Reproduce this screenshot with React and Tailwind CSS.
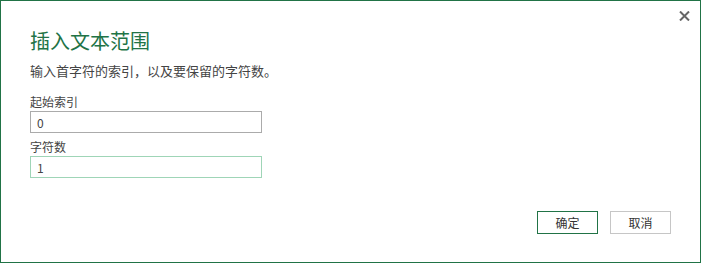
import React from "react";

const font = { fontFamily: '"Microsoft YaHei", "Noto Sans CJK SC", "Noto Sans", sans-serif' };

function Field({ label, value, focused }) {
    return (
        <div className="flex flex-col">
            <label className="mt-0 text-[12px] leading-[12px] text-[#444]">{label}</label>
            <input
                readOnly
                value={value}
                className={
                    "mt-[3px] h-[22px] w-[232px] border bg-white px-[6px] text-[12px] leading-[20px] text-[#444] outline-none " +
                    (focused ? "border-[#9fd5b7]" : "border-[#ababab]")
                }
            />
        </div>
    );
}

export default function App() {
    return (
        <div
            style={font}
            className="relative flex h-[263px] w-[701px] flex-col border border-[#217346] bg-white"
        >
            <button className="absolute right-[10px] top-[9px] flex h-[12px] w-[12px] items-center justify-center text-[#666]">
                <svg width="11" height="10" viewBox="0 0 11 10">
                    <path d="M1 0.5 L10 9.5 M10 0.5 L1 9.5" stroke="#666" strokeWidth="2" />
                </svg>
            </button>
            <div className="flex flex-col px-[29px] pt-[30px]">
                <h1 className="text-[20px] font-normal leading-[20px] text-[#217346]">插入文本范围</h1>
                <p className="mt-[13px] text-[13px] leading-[13px] text-[#444]">
                    输入首字符的索引，以及要保留的字符数。
                </p>
                <div className="mt-[19px]">
                    <Field label="起始索引" value="0" />
                </div>
                <div className="mt-[8px]">
                    <Field label="字符数" value="1" focused />
                </div>
            </div>
            <div className="mt-[33px] flex justify-end gap-[12px] pr-[29px]">
                <button className="h-[23px] w-[61px] border border-[#217346] bg-white text-[12px] text-[#333]">
                    确定
                </button>
                <button className="h-[23px] w-[61px] border border-[#c6c6c6] bg-white text-[12px] text-[#333]">
                    取消
                </button>
            </div>
        </div>
    );
}
